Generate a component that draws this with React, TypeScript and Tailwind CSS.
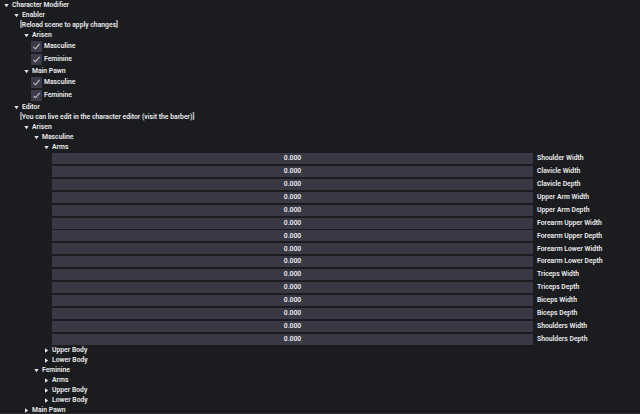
import React from "react";

const Down = () => (
  <svg width="5" height="5" viewBox="0 0 5 5" className="shrink-0">
    <path d="M0.3 1 L4.7 1 L2.5 4.2 Z" fill="#e4e4e4" />
  </svg>
);
const Right = () => (
  <svg width="5" height="5" viewBox="0 0 5 5" className="shrink-0">
    <path d="M1 0.3 L1 4.7 L4.2 2.5 Z" fill="#e4e4e4" />
  </svg>
);

const Node = ({ level, open, label }: { level: number; open: boolean; label: string }) => (
  <div className="flex items-center h-[10px]" style={{ paddingLeft: 4 + level * 10 }}>
    <div className="w-[7px] flex items-center">{open ? <Down /> : <Right />}</div>
    <span className="ml-[1px]">{label}</span>
  </div>
);

const Text = ({ level, label }: { level: number; label: string }) => (
  <div className="flex items-center h-[10px]" style={{ paddingLeft: 20 + (level - 1) * 10 }}>
    <span>{label}</span>
  </div>
);

const Check = ({ label }: { label: string }) => (
  <div className="flex items-center h-[13px] pl-[31px]">
    <div className="w-[11px] h-[11px] bg-[#3b3b49] flex items-center justify-center">
      <svg width="9" height="9" viewBox="0 0 9 9">
        <path d="M1.5 4.8 L3.5 6.8 L7.6 1.8" stroke="#c4c4ca" strokeWidth="1.1" fill="none" />
      </svg>
    </div>
    <span className="ml-[2px]">{label}</span>
  </div>
);

const sliders = [
  "Shoulder Width",
  "Clavicle Width",
  "Clavicle Depth",
  "Upper Arm Width",
  "Upper Arm Depth",
  "Forearm Upper Width",
  "Forearm Upper Depth",
  "Forearm Lower Width",
  "Forearm Lower Depth",
  "Triceps Width",
  "Triceps Depth",
  "Biceps Width",
  "Biceps Depth",
  "Shoulders Width",
  "Shoulders Depth",
];

export default function App() {
  return (
    <div
      className="w-[640px] h-[414px] overflow-hidden bg-[#1b1c1f] text-[#ececee] text-[6.8px] font-semibold leading-none flex flex-col border-b border-[#2c2d31]"
      style={{ fontFamily: "Roboto, 'Liberation Sans', sans-serif" }}
    >
      <div className="flex-1 overflow-hidden">
        <Node level={0} open label="Character Modifier" />
        <Node level={1} open label="Enabler" />
        <Text level={1} label="[Reload scene to apply changes]" />
        <Node level={2} open label="Arisen" />
        <Check label="Masculine" />
        <Check label="Feminine" />
        <Node level={2} open label="Main Pawn" />
        <Check label="Masculine" />
        <Check label="Feminine" />
        <Node level={1} open label="Editor" />
        <Text level={1} label="[You can live edit in the character editor (visit the barber)]" />
        <Node level={2} open label="Arisen" />
        <Node level={3} open label="Masculine" />
        <Node level={4} open label="Arms" />
        <div className="flex flex-col">
          {sliders.map((s) => (
            <div key={s} className="flex items-center h-[12.93px] pl-[52px]">
              <div className="w-[481px] h-[11px] bg-[#393946] flex items-center justify-center">
                0.000
              </div>
              <span className="ml-[4px]">{s}</span>
            </div>
          ))}
        </div>
        <Node level={4} open={false} label="Upper Body" />
        <Node level={4} open={false} label="Lower Body" />
        <Node level={3} open label="Feminine" />
        <Node level={4} open={false} label="Arms" />
        <Node level={4} open={false} label="Upper Body" />
        <Node level={4} open={false} label="Lower Body" />
        <Node level={2} open={false} label="Main Pawn" />
      </div>
    </div>
  );
}
